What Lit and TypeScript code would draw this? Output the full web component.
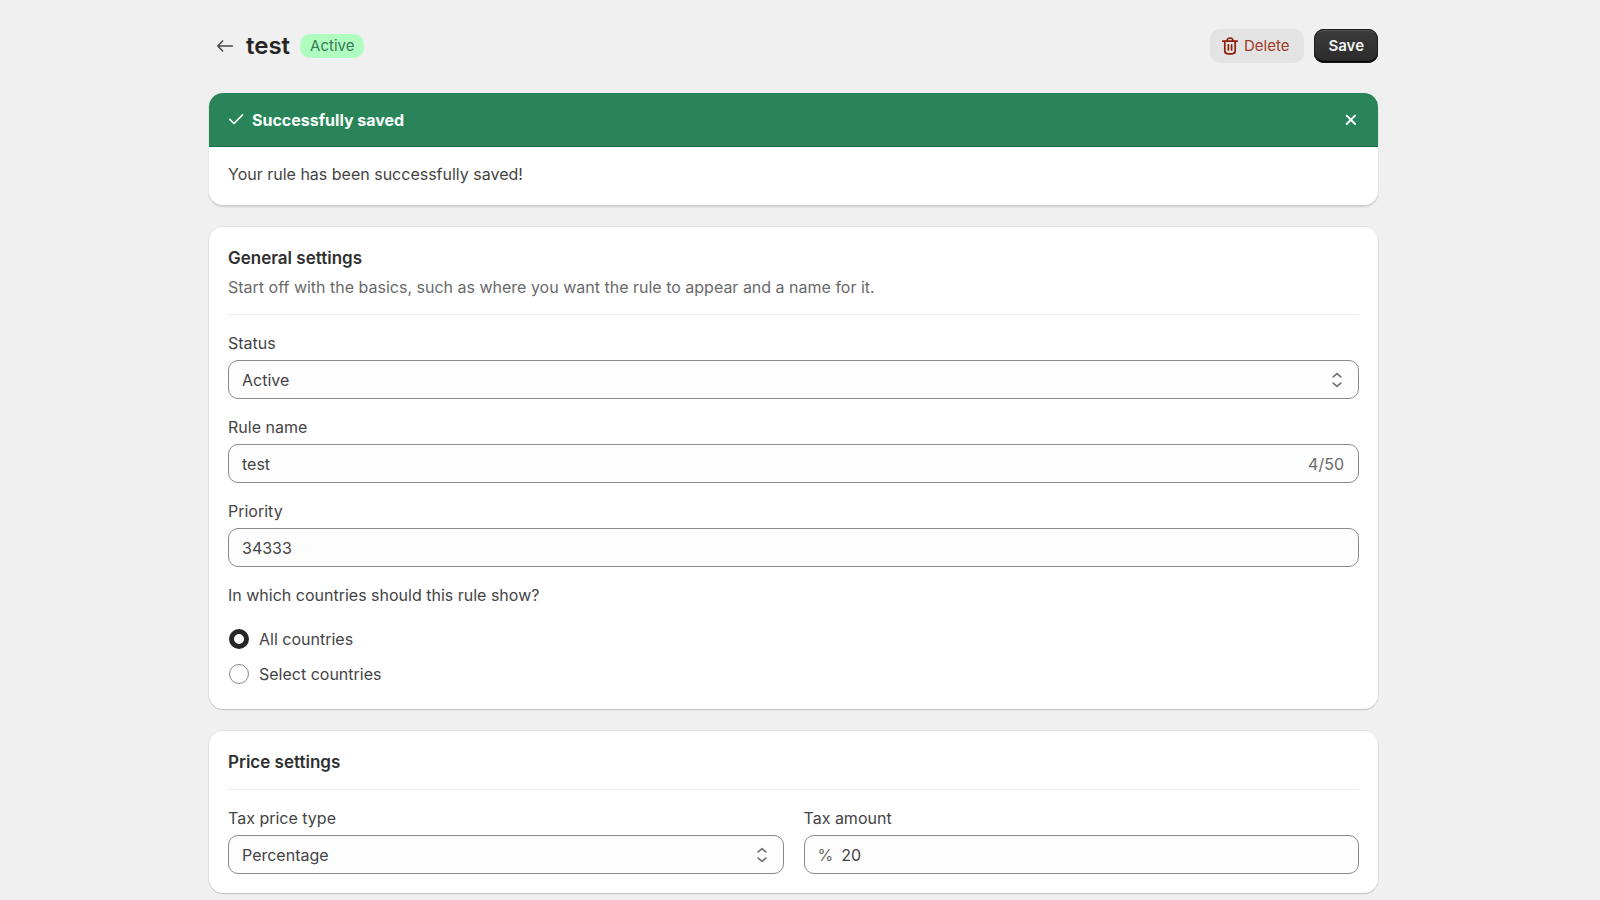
import { LitElement, css, html } from "lit";
import { customElement, state } from "lit/decorators.js";

@customElement("app-root")
export class AppRoot extends LitElement {
  @state() private bannerOpen = true;
  @state() private ruleName = "test";

  static styles = css`
    :host {
      display: block;
      box-sizing: border-box;
      min-height: 100vh;
      padding: 28px 13px 7px 0;
      background: #f0f0f0;
      color: #444;
      font: 400 16px/24px Inter, sans-serif;
    }
    *,
    *::before {
      box-sizing: border-box;
    }
    h1,
    h2,
    p,
    fieldset,
    legend {
      margin: 0;
      padding: 0;
      border: 0;
    }
    button,
    input,
    select {
      margin: 0;
      font: inherit;
      color: inherit;
    }
    svg {
      display: block;
      flex: none;
    }
    .page {
      max-width: 1169px;
      margin: 0 auto;
      display: flex;
      flex-direction: column;
      gap: 22px;
    }
    .header {
      display: flex;
      align-items: center;
      gap: 10px;
      height: 35px;
      margin: 0 0 8px 5px;
    }
    .back {
      display: flex;
      padding: 2px;
      color: #4a4a4a;
    }
    .title {
      font-size: 24px;
      line-height: 32px;
      font-weight: 600;
      color: #262626;
    }
    .badge {
      padding: 0 10px;
      border-radius: 10px;
      background: #affebf;
      color: #3a7a58;
      font-size: 15px;
      line-height: 24px;
    }
    .actions {
      display: flex;
      gap: 10px;
      margin-left: auto;
    }
    .btn {
      display: flex;
      align-items: center;
      height: 34px;
      padding: 0 14px;
      border: 0;
      border-radius: 10px;
      font-size: 15px;
      cursor: pointer;
    }
    .danger {
      gap: 4px;
      padding: 0 15px 0 10px;
      background: #e3e3e3;
      color: #a03a2a;
    }
    .danger svg {
      color: #8e1f0b;
    }
    .primary {
      background: linear-gradient(#3b3b3b, #2b2b2b);
      color: #f4f4f4;
      font-weight: 600;
      box-shadow: inset 0 0 0 1px #1c1c1c, inset 0 -2px 0 #000,
        inset 0 2px 0 #555;
    }
    .card {
      background: #fff;
      border-radius: 14px;
      box-shadow: 0 1px 1px rgba(0, 0, 0, 0.16),
        0 0 0 1px rgba(0, 0, 0, 0.05);
    }
    .section {
      padding: 19px;
    }
    .banner {
      overflow: hidden;
      box-shadow: 0 2px 2px rgba(0, 0, 0, 0.14);
    }
    .banner-head {
      display: flex;
      align-items: center;
      gap: 4px;
      height: 54px;
      padding: 0 15px 0 16px;
      background: #29845a;
      border-bottom: 1px solid #0c6f3f;
      color: #f8fffb;
    }
    .banner-title {
      font-size: 16px;
      font-weight: 700;
    }
    .close {
      display: flex;
      margin-left: auto;
      padding: 0;
      border: 0;
      background: none;
      cursor: pointer;
    }
    .banner-body {
      padding: 15px 19px 19px;
    }
    .heading {
      font-size: 17px;
      line-height: 24px;
      font-weight: 600;
      color: #303030;
    }
    .sub {
      margin-top: 5px;
      color: #6a6a6a;
    }
    .rule {
      margin: 15px 0 16px;
      border: 0;
      border-top: 1px solid #ebebeb;
    }
    .fields {
      display: flex;
      flex-direction: column;
      gap: 16px;
    }
    .columns {
      display: grid;
      grid-template-columns: 1fr 1fr;
      gap: 20px;
    }
    .field {
      display: flex;
      flex-direction: column;
      gap: 5px;
      min-width: 0;
    }
    .control {
      display: flex;
      align-items: center;
      gap: 8px;
      height: 39px;
      padding: 0 14px 0 13px;
      border: 1px solid #8a8a8a;
      border-radius: 10px;
      background: #fdfdfd;
    }
    .control input {
      flex: 1;
      min-width: 0;
      height: 24px;
      padding: 0;
      border: 0;
      outline: 0;
      background: none;
    }
    .muted {
      color: #6a6a6a;
    }
    .select {
      display: grid;
      align-items: center;
      height: 39px;
    }
    .select > * {
      grid-area: 1 / 1;
    }
    .select select {
      appearance: none;
      width: 100%;
      height: 39px;
      padding: 0 40px 0 13px;
      border: 1px solid #8a8a8a;
      border-radius: 10px;
      background: #fdfdfd;
    }
    .select svg {
      justify-self: end;
      margin-right: 12px;
      pointer-events: none;
    }
    .choices {
      display: flex;
      flex-direction: column;
      gap: 11px;
      margin: 20px 0 4px;
    }
    .choice {
      display: flex;
      align-items: center;
      gap: 10px;
      padding-left: 1px;
    }
    .choice input {
      appearance: none;
      width: 20px;
      height: 20px;
      border: 1px solid #8a8a8a;
      border-radius: 50%;
      background: #fdfdfd;
    }
    .choice input:checked {
      border: 5px solid #262626;
      background: #fff;
    }
  `;

  private caret() {
    return html`<svg width="20" height="20" viewBox="0 0 20 20" fill="none" stroke="#757575"
      stroke-width="1.8" stroke-linecap="round" stroke-linejoin="round" aria-hidden="true">
      <path d="M6.2 6.9 10 3.6l3.8 3.3M6.2 13.1l3.8 3.3 3.8-3.3" />
    </svg>`;
  }

  render() {
    return html`
      <main class="page">
        <header class="header">
          <a class="back" href="#" aria-label="Back">
            <svg width="18" height="18" viewBox="0 0 18 18" fill="none" stroke="currentColor"
              stroke-width="1.6" stroke-linecap="round" stroke-linejoin="round">
              <path d="M16.4 9H2M6.6 4 1.8 9l4.8 5" />
            </svg>
          </a>
          <h1 class="title">test</h1>
          <span class="badge">Active</span>
          <div class="actions">
            <button class="btn danger" type="button">
              <svg width="20" height="20" viewBox="0 0 20 20" fill="none" stroke="currentColor"
                stroke-width="1.7" stroke-linecap="round" stroke-linejoin="round">
                <path d="M2.8 5.2h14.4M7 5a3 3 0 0 1 6 0M4.8 5.4v9.4a3 3 0 0 0 3 3h4.4a3 3 0 0 0 3-3V5.4M8.4 8.8v5.2M11.6 8.8v5.2" />
              </svg>
              Delete
            </button>
            <button class="btn primary" type="button">Save</button>
          </div>
        </header>

        ${this.bannerOpen
          ? html`<section class="card banner" role="status">
              <div class="banner-head">
                <svg width="23" height="23" viewBox="0 0 23 23" fill="none" stroke="currentColor"
                  stroke-width="1.6" stroke-linecap="round" stroke-linejoin="round">
                  <path d="M4.8 11.4l4.2 4.1 8.5-8.6" />
                </svg>
                <h2 class="banner-title">Successfully saved</h2>
                <button class="close" type="button" aria-label="Dismiss"
                  @click=${() => (this.bannerOpen = false)}>
                  <svg width="24" height="24" viewBox="0 0 24 24" fill="none" stroke="currentColor"
                    stroke-width="2" stroke-linecap="round">
                    <path d="M7.7 7.6l8.4 8.4M16.1 7.6l-8.4 8.4" />
                  </svg>
                </button>
              </div>
              <p class="banner-body">Your rule has been successfully saved!</p>
            </section>`
          : null}

        <section class="card section">
          <h2 class="heading">General settings</h2>
          <p class="sub">
            Start off with the basics, such as where you want the rule to appear and a name for it.
          </p>
          <hr class="rule" />
          <div class="fields">
            <div class="field">
              <label for="status">Status</label>
              <div class="select">
                <select id="status"><option>Active</option></select>
                ${this.caret()}
              </div>
            </div>
            <div class="field">
              <label for="name">Rule name</label>
              <div class="control">
                <input id="name" type="text" maxlength="50" .value=${this.ruleName}
                  @input=${(e: Event) => (this.ruleName = (e.target as HTMLInputElement).value)} />
                <span class="muted">${this.ruleName.length}/50</span>
              </div>
            </div>
            <div class="field">
              <label for="priority">Priority</label>
              <div class="control"><input id="priority" type="text" value="34333" /></div>
            </div>
            <fieldset>
              <legend>In which countries should this rule show?</legend>
              <div class="choices">
                <label class="choice"><input type="radio" name="countries" checked />All countries</label>
                <label class="choice"><input type="radio" name="countries" />Select countries</label>
              </div>
            </fieldset>
          </div>
        </section>

        <section class="card section">
          <h2 class="heading">Price settings</h2>
          <hr class="rule" />
          <div class="columns">
            <div class="field">
              <label for="type">Tax price type</label>
              <div class="select">
                <select id="type"><option>Percentage</option></select>
                ${this.caret()}
              </div>
            </div>
            <div class="field">
              <label for="amount">Tax amount</label>
              <div class="control">
                <span class="muted">%</span>
                <input id="amount" type="text" value="20" />
              </div>
            </div>
          </div>
        </section>
      </main>
    `;
  }
}
